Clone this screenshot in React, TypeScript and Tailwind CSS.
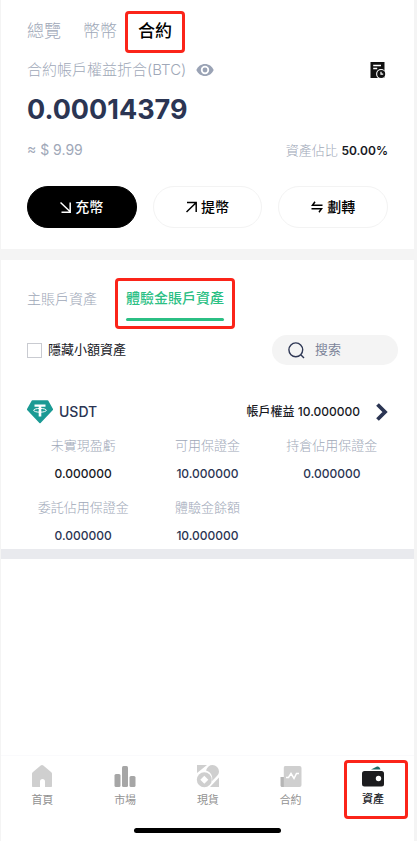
import type { ReactNode } from "react";

const eye = (
  <svg width="18" height="14" viewBox="0 0 18 14" fill="none"><path d="M0.3 7C2 3.200 5.200 1 9 1s7 2.200 8.700 6c-1.700 3.800-4.900 6-8.700 6S2 10.800.3 7z" fill="#9aa3b5" /><circle cx="9" cy="7" r="4.200" fill="#fff" /><circle cx="9" cy="7" r="2.400" fill="#9aa3b5" /></svg>
);
const record = (
  <svg width="16" height="18" viewBox="0 0 16 18" fill="none"><path d="M0.500 1h14v16h-14z" fill="#111" /><path d="M3.200 4.500h7.800M3.200 7.500h4" stroke="#fff" strokeWidth="1.300" /><circle cx="11" cy="13" r="4.900" fill="#fff" /><circle cx="11.200" cy="13" r="4" fill="#111" /><path d="M11 10.800v2.400h2.200" stroke="#fff" strokeWidth="1.200" /></svg>
);
const arrowIn = (
  <svg width="11" height="12" viewBox="0 0 11 12" fill="none" stroke="currentColor" strokeWidth="1.500"><path d="M0.500 1.500l9.500 9M10.200 1.500v9.700H1.500" /></svg>
);
const arrowOut = (
  <svg width="11" height="12" viewBox="0 0 11 12" fill="none" stroke="currentColor" strokeWidth="1.500"><path d="M0.500 11L10 1.800M1 1.500h9.200V11" /></svg>
);
const swap = (
  <svg width="12" height="12" viewBox="0 0 12 12" fill="none" stroke="currentColor" strokeWidth="1.500"><path d="M4 0.800L1.500 4.200H11.500M0.500 7.800H10.500L8 11.200" /></svg>
);
const search = (
  <svg width="17" height="17" viewBox="0 0 17 17" fill="none" stroke="#2f3855" strokeWidth="1.400"><circle cx="7.800" cy="7.800" r="6.900" /><path d="M12.800 12.800L16 16" /></svg>
);
const chevron = (
  <svg width="12" height="18" viewBox="0 0 12 18" fill="none" stroke="#2b3553" strokeWidth="3.800"><path d="M1.500 1.500L9 9l-7.500 7.500" /></svg>
);
const tether = (
  <svg width="26" height="24" viewBox="0 0 26 24" fill="none"><path d="M5.500 1h15L25.300 9.500 13 22.500.7 9.500z" fill="#1b9a94" stroke="#1b9a94" strokeWidth="1.600" strokeLinejoin="round" /><path d="M7.500 4.500h11v2.200h-4.200v9.800h-2.600V6.700H7.500z" fill="#fff" /><ellipse cx="13" cy="10.300" rx="6.300" ry="1.900" stroke="#fff" strokeWidth="1" /></svg>
);

const home = (
  <svg width="24" height="24" viewBox="0 0 24 24" fill="#cfcfcf"><path d="M12 1c.5 0 .9.200 1.300.5l8 6.800c.5.400.7.900.7 1.500V22c0 .6-.4 1-1 1h-6v-5.500a2.500 2.500 0 0 0-5 0V23H3c-.6 0-1-.4-1-1V9.800c0-.6.200-1.100.7-1.500l8-6.800c.4-.3.800-.5 1.300-.5z" /></svg>
);
const market = (
  <svg width="24" height="24" viewBox="0 0 24 24" fill="#a6a6a6"><rect x="1.500" y="10" width="6" height="13" rx="1.500" /><rect x="9" y="2" width="6" height="21" rx="1.500" /><rect x="16.500" y="12" width="6" height="11" rx="1.500" /></svg>
);
const spot = (
  <svg width="24" height="24" viewBox="0 0 24 24" fill="#cfcfcf"><path d="M1 1h10L1 9z" /><path d="M10 6.500C11 3 13.500 1 16.500 1A6.500 6.500 0 0 1 23 7.500c0 2.500-1.500 4-3.500 6L16 17c1-5-1-9-6-10.500z" /><path d="M23 13.500V23h-9z" /><circle cx="8.300" cy="15.700" r="7.500" /><path d="M8.300 11.700l4 4-4 4-4-4z" fill="#fff" /></svg>
);
const futures = (
  <svg width="24" height="24" viewBox="0 0 24 24" fill="none"><path d="M1.500 13H6v10H3c-.8 0-1.500-.7-1.500-1.500z" fill="#b5b5b5" /><path d="M6.500 2h14a2 2 0 0 1 2 2v17a2 2 0 0 1-2 2H4.800V3.700c0-1 .7-1.700 1.700-1.700z" fill="#cfcfcf" /><path d="M7 13.500h2.500l2.500-4 3 5 2.500-5H20" stroke="#fff" strokeWidth="1.500" /></svg>
);
const wallet = (
  <svg width="24" height="24" viewBox="0 0 24 24" fill="none"><path d="M10 6.500l6-3c1.500-.5 2.800.5 3.500 3z" fill="#1c6b66" /><rect x="1" y="8" width="22" height="15.500" rx="2.500" fill="#1c1c1e" /><circle cx="17.500" cy="15.500" r="2.700" fill="#fff" /></svg>
);

const ACTIONS = [
  { icon: arrowIn, label: "充幣", style: "border-black bg-black text-white" },
  { icon: arrowOut, label: "提幣", style: "border-[#f3f3f3] bg-white text-black" },
  { icon: swap, label: "劃轉", style: "border-[#f3f3f3] bg-white text-black" },
];

const FIGURES = [
  { label: "未實現盈虧", value: "0.000000", color: "text-[#18191f]" },
  { label: "可用保證金", value: "10.000000", color: "text-[#2b3553]" },
  { label: "持倉佔用保證金", value: "0.000000", color: "text-[#2b3553]" },
  { label: "委託佔用保證金", value: "0.000000", color: "text-[#2b3553]" },
  { label: "體驗金餘額", value: "10.000000", color: "text-[#2b3553]" },
];

const NAV = [
  { icon: home, label: "首頁" },
  { icon: market, label: "市場" },
  { icon: spot, label: "現貨" },
  { icon: futures, label: "合約" },
];

// red frame around the control the guide points at
function Marked({ className, children }: { className: string; children: ReactNode }) {
  return <div className={`rounded-sm border-3 border-[#fb2419] ${className}`}>{children}</div>;
}

export default function App() {
  return (
    <div className="flex min-h-screen flex-col border-r-3 border-l border-[#f4f4f4] bg-white font-['Inter','Noto_Sans_CJK_TC',sans-serif] text-[#2b3553]">
      <section className="px-[26px] pt-3 pb-[21px]">
        <div className="flex h-10 items-center text-[17px] text-[#a0a8b8]">
          <button className="w-[34px] font-light whitespace-nowrap">總覽</button>
          <button className="ml-[22px] w-[34px] font-light whitespace-nowrap">幣幣</button>
          <Marked className="ml-2">
            <button className="flex h-9 w-[54px] items-center justify-center font-medium text-black">合約</button>
          </Marked>
        </div>
        <div className="flex h-9 items-center">
          <span className="text-[15px] font-light text-[#a0a8b8]">合約帳戶權益折合(BTC)</span>
          <button aria-label="顯示金額" className="ml-[10px]">{eye}</button>
          <button aria-label="資金記錄" className="mr-[2px] ml-auto">{record}</button>
        </div>
        <p className="text-[27px] leading-11 font-bold">0.00014379</p>
        <div className="flex h-9 items-center justify-between text-sm text-[#a0a8b8]">
          <span>≈ $ 9.99</span>
          <span className="text-[13px] font-light">資產佔比 <b className="text-xs font-semibold text-[#18191f]">50.00%</b></span>
        </div>
        <div className="mt-[18px] grid grid-cols-3 gap-4">
          {ACTIONS.map((a) => (
            <button key={a.label} className={`flex h-[42px] items-center justify-center gap-1 rounded-full border text-sm font-medium ${a.style}`}>
              {a.icon}
              {a.label}
            </button>
          ))}
        </div>
      </section>

      <section className="border-t-11 border-[#f4f4f4] pt-[18px]">
        <div className="flex pl-[26px] text-sm">
          <button className="h-[42px] w-[70px] text-left font-light whitespace-nowrap text-[#a0a8b8]">主賬戶資產</button>
          <Marked className="ml-[18px] px-2">
            <button className="block h-[45px] whitespace-nowrap text-[#2bbf84]">
              <span className="block pt-[2px] font-medium">體驗金賬戶資產</span>
              <span className="mt-[10px] block h-[3px] rounded-full bg-[#2bbf84]" />
            </button>
          </Marked>
        </div>
        <div className="mt-[6px] flex h-[30px] items-center justify-between pr-4 pl-[26px]">
          <label className="flex items-center gap-[6px] text-[13px] text-[#18191f]">
            <input type="checkbox" className="size-[15px] appearance-none border border-[#c9cbd1] bg-white" />
            隱藏小額資產
          </label>
          <label className="flex h-[30px] w-[126px] items-center gap-[10px] rounded-full bg-[#f4f4f4] pl-4">
            {search}
            <input type="text" aria-label="搜索" placeholder="搜索" className="w-16 bg-transparent text-[13px] outline-none placeholder:text-[#7c8499]" />
          </label>
        </div>

        <div className="mt-8 flex h-[30px] items-center px-[26px]">
          {tether}
          <span className="ml-[6px] text-sm font-medium">USDT</span>
          <span className="ml-auto text-xs font-medium text-[#18191f]">帳戶權益 10.000000</span>
          <button aria-label="查看詳情" className="ml-4">{chevron}</button>
        </div>
        <dl className="grid grid-cols-3 gap-y-[2px] px-5 text-center">
          {FIGURES.map((f) => (
            <div key={f.label} className="h-[60px] pt-2">
              <dt className="text-[13px] leading-5 font-light text-[#a0a8b8]">{f.label}</dt>
              <dd className={`pt-[9px] text-xs leading-5 font-medium ${f.color}`}>{f.value}</dd>
            </div>
          ))}
        </dl>
        <div className="h-[10px] bg-[#e9eaee]" />
      </section>

      <nav className="mt-auto border-t border-[#fafafc]">
        <div className="flex pt-1 pr-[6px] text-[11px] text-[#929292]">
          {NAV.map((n) => (
            <a key={n.label} href="#" className="flex flex-1 flex-col items-center gap-1 pt-1 leading-4">
              {n.icon}
              {n.label}
            </a>
          ))}
          <Marked className="ml-3">
            <a href="#" className="flex h-[53px] w-[58px] flex-col items-center gap-1 pr-[6px] leading-4 font-medium text-[#18191f]">
              {wallet}
              資產
            </a>
          </Marked>
        </div>
        <div className="mx-auto mt-[9px] mb-2 h-[5px] w-[147px] rounded-full bg-black" />
      </nav>
    </div>
  );
}
